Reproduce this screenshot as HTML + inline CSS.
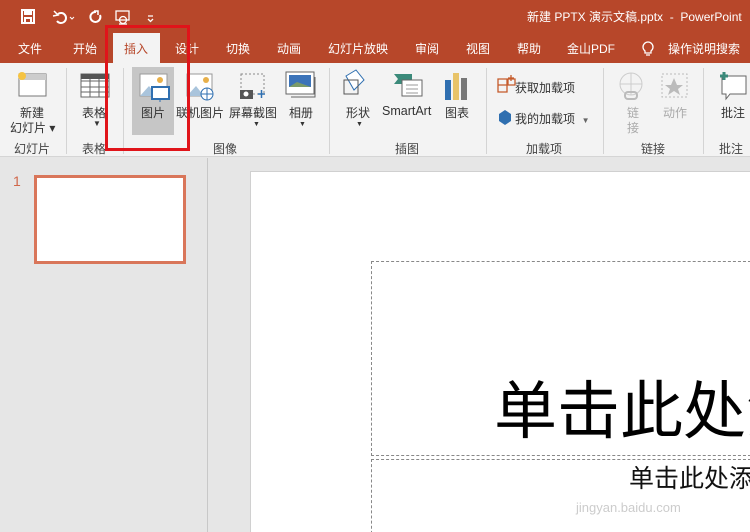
<!DOCTYPE html>
<html><head><meta charset="utf-8"><style>
*{margin:0;padding:0;box-sizing:border-box}
html,body{width:750px;height:532px;overflow:hidden}
body{position:relative;background:#e6e6e6;font-family:"Liberation Sans","Noto Sans CJK SC",sans-serif;font-size:12px;color:#262626}
.a{position:absolute;white-space:nowrap}
#title{left:0;top:0;width:750px;height:63px;background:#b7472a}
.tab{color:#fff;font-size:12px;top:40px}
#ribbon{left:0;top:63px;width:750px;height:94px;background:#f3f3f3;border-bottom:1px solid #d5d5d5}
.sep{top:68px;width:1px;height:86px;background:#d4d4d4}
.lbl{font-size:12px;color:#333}
.grp{top:140px;font-size:12px;color:#444}
</style></head><body>
<div id="title" class="a"></div>
<svg class="a" style="left:20px;top:8px" width="140" height="18" viewBox="0 0 140 18" fill="none" stroke="#fff" stroke-width="2">
<rect x="2" y="2" width="12" height="13"/><rect x="5" y="2" width="6" height="4" fill="#fff"/><rect x="5" y="10" width="6" height="5"/>
<path d="M38 6 a5 5 0 1 1 -1 7"/><path d="M34 3 l4 4 l-5 1" stroke-width="1.5"/>
<path d="M50 9 l2 2 l2-2" stroke-width="1"/>
<path d="M76 4 a5 5 0 1 0 4 3"/><path d="M74 3 l4 0 l0 4" stroke-width="1.5"/>
<rect x="96" y="3" width="13" height="9" stroke-width="1.3"/><circle cx="103" cy="12" r="3.5" stroke-width="1.3"/><path d="M99 16 h8" stroke-width="1.3"/>
<path d="M128 8 h5 M128 11 l2.5 2.5 l2.5-2.5" stroke-width="1.3"/>
</svg>
<div class="a" style="left:527px;top:8px;color:#fff;font-size:12px">新建 PPTX 演示文稿.pptx &nbsp;-&nbsp; PowerPoint</div>
<div class="a" style="left:113px;top:33px;width:47px;height:31px;background:#f3f3f3"></div>
<div class="a tab" style="left:18px">文件</div>
<div class="a tab" style="left:73px">开始</div>
<div class="a tab" style="left:124px;color:#b7472a">插入</div>
<div class="a tab" style="left:175px">设计</div>
<div class="a tab" style="left:226px">切换</div>
<div class="a tab" style="left:277px">动画</div>
<div class="a tab" style="left:328px">幻灯片放映</div>
<div class="a tab" style="left:415px">审阅</div>
<div class="a tab" style="left:466px">视图</div>
<div class="a tab" style="left:517px">帮助</div>
<div class="a tab" style="left:567px">金山PDF</div>
<svg class="a" style="left:641px;top:40px" width="14" height="17" viewBox="0 0 14 17" fill="none" stroke="#fff" stroke-width="1.3"><path d="M4 11 a5 5 0 1 1 6 0 v2 h-6z M5 15 h4"/></svg>
<div class="a tab" style="left:668px">操作说明搜索</div>
<div id="ribbon" class="a"></div>
<div class="a" style="left:132px;top:67px;width:42px;height:68px;background:#c6c6c6"></div>
<svg class="a" style="left:0;top:66px" width="750" height="70" viewBox="0 0 750 70">
<g fill="none" stroke="#777"><rect x="19" y="8" width="27" height="22" fill="#fff"/><rect x="19" y="8" width="27" height="6" fill="#ccc" stroke="none"/></g>
<circle cx="22" cy="10" r="4" fill="#f5c342"/>
<g stroke="#666" fill="#fff"><rect x="81" y="8" width="28" height="23"/><path d="M81 15h28M81 21h28M81 26h28M90 8v23M99 8v23" fill="none"/></g>
<rect x="81" y="8" width="28" height="5" fill="#555"/>
<rect x="140" y="8" width="27" height="22" fill="#fff" stroke="#999"/><path d="M140 30 l9-10 l8 10z" fill="#a9c4dc"/><circle cx="160" cy="14" r="3" fill="#e8b04a"/>
<rect x="152" y="21" width="17" height="12" fill="#fff" stroke="#2f6fb0" stroke-width="2"/><path d="M160 33v3" stroke="#2f6fb0"/>
<rect x="187" y="8" width="25" height="22" fill="#fff" stroke="#999"/><path d="M187 30 l9-10 l8 10z" fill="#a9c4dc"/><circle cx="206" cy="14" r="3" fill="#e8b04a"/>
<circle cx="207" cy="28" r="6" fill="#fff" stroke="#2f6fb0"/><path d="M201 28h12M207 22v12" stroke="#2f6fb0"/>
<rect x="241" y="8" width="23" height="20" fill="none" stroke="#888" stroke-dasharray="2 2"/><rect x="240" y="24" width="13" height="9" fill="#555"/><circle cx="246" cy="28" r="2.5" fill="#fff"/><path d="M258 28h7M261.5 24v8" stroke="#2f6fb0" stroke-width="1.5"/>
<rect x="286" y="6" width="28" height="22" fill="#fff" stroke="#666"/><rect x="289" y="9" width="22" height="12" fill="#3b73b9"/><path d="M289 21 l8-5 l14 5z" fill="#7a9a6a"/><path d="M291 31h24v-20" fill="none" stroke="#666"/>
<path d="M346 10 l10-6 l8 10 l-10 10z" fill="#fff" stroke="#2f6fb0"/><rect x="344" y="14" width="14" height="14" fill="none" stroke="#555"/>
<path d="M394 8h18v6l-4 4h-14l4-5z" fill="#3b8a7a"/><rect x="402" y="14" width="20" height="16" fill="#fff" stroke="#666"/><path d="M406 19h12M406 23h12M406 27h12" stroke="#999"/>
<rect x="445" y="14" width="6" height="20" fill="#2f6fb0"/><rect x="453" y="7" width="6" height="27" fill="#e8c368"/><rect x="461" y="12" width="6" height="22" fill="#777"/>
<path d="M498 13h9v13h-9zM498 19h9M508 13h7v6h-7zM511 9v6M508 12h6" fill="none" stroke="#c55a2a" stroke-width="1.3"/>
<path d="M499 48 l6-4 l6 4 v7 l-6 4 l-6-4z" fill="#2f6fb0"/>
<circle cx="631" cy="18" r="11" fill="none" stroke="#ccc"/><path d="M620 18h22M631 7v22" stroke="#ccc"/><rect x="625" y="26" width="12" height="7" rx="3" fill="none" stroke="#bbb" stroke-width="2"/>
<rect x="662" y="8" width="25" height="23" fill="none" stroke="#bbb" stroke-dasharray="2 2"/><path d="M674 12l3 7h6l-5 4l2 6l-6-4l-6 4l2-6l-5-4h6z" fill="#bbb"/>
<path d="M722 10h24v18h-16l-4 5v-5h-4z" fill="#fff" stroke="#666"/><path d="M720 10h8M724 6v8" stroke="#3b8a7a" stroke-width="3"/>
</svg>
<div class="a lbl" style="left:20px;top:104px">新建</div>
<div class="a lbl" style="left:10px;top:119px">幻灯片 ▾</div>
<div class="a lbl" style="left:82px;top:104px">表格</div>
<div class="a lbl" style="left:93px;top:119px;font-size:8px">▼</div>
<div class="a lbl" style="left:141px;top:104px">图片</div>
<div class="a lbl" style="left:176px;top:104px">联机图片</div>
<div class="a lbl" style="left:229px;top:104px">屏幕截图</div>
<div class="a lbl" style="left:253px;top:121px;font-size:7px">▼</div>
<div class="a lbl" style="left:289px;top:104px">相册</div>
<div class="a lbl" style="left:299px;top:121px;font-size:7px">▼</div>
<div class="a lbl" style="left:346px;top:104px">形状</div>
<div class="a lbl" style="left:356px;top:121px;font-size:7px">▼</div>
<div class="a lbl" style="left:382px;top:104px;font-size:12.5px">SmartArt</div>
<div class="a lbl" style="left:445px;top:104px">图表</div>
<div class="a lbl" style="left:515px;top:79px">获取加载项</div>
<div class="a lbl" style="left:515px;top:110px">我的加载项 &nbsp;<span style="font-size:8px;color:#666">▼</span></div>
<div class="a lbl" style="left:627px;top:104px;color:#aaa">链</div>
<div class="a lbl" style="left:627px;top:119px;color:#aaa">接</div>
<div class="a lbl" style="left:663px;top:104px;color:#aaa">动作</div>
<div class="a lbl" style="left:721px;top:104px">批注</div>
<div class="a grp" style="left:14px">幻灯片</div>
<div class="a grp" style="left:82px">表格</div>
<div class="a grp" style="left:213px">图像</div>
<div class="a grp" style="left:395px">插图</div>
<div class="a grp" style="left:526px">加载项</div>
<div class="a grp" style="left:641px">链接</div>
<div class="a grp" style="left:719px">批注</div>
<div class="a sep" style="left:66px"></div>
<div class="a sep" style="left:123px"></div>
<div class="a sep" style="left:329px"></div>
<div class="a sep" style="left:486px"></div>
<div class="a sep" style="left:603px"></div>
<div class="a sep" style="left:703px"></div>
<div class="a" style="left:105px;top:25px;width:85px;height:126px;border:3px solid #e0141a"></div>
<div class="a" style="left:207px;top:158px;width:1px;height:374px;background:#c8c8c8"></div>
<div class="a" style="left:13px;top:173px;color:#d0674a;font-size:14px">1</div>
<div class="a" style="left:34px;top:175px;width:152px;height:89px;background:#fff;border:3px solid #d9765a"></div>
<div class="a" style="left:250px;top:171px;width:500px;height:361px;background:#fff;border-left:1px solid #d0d0d0;border-top:1px solid #d0d0d0;overflow:hidden">
  <div class="a" style="left:120px;top:89px;width:380px;height:195px;border:1px dashed #888;border-right:none"></div>
  <div class="a" style="left:120px;top:287px;width:380px;height:80px;border:1px dashed #888;border-right:none"></div>
  <div class="a" style="left:243px;top:200px;font-size:63px;color:#000;line-height:80px">单击此处添加标题</div>
  <div class="a" style="left:378px;top:291px;font-size:25px;color:#111;line-height:32px">单击此处添加副标题</div>
  <div class="a" style="left:325px;top:328px;font-size:13px;color:#ccc">jingyan.baidu.com</div>
</div>
</body></html>
